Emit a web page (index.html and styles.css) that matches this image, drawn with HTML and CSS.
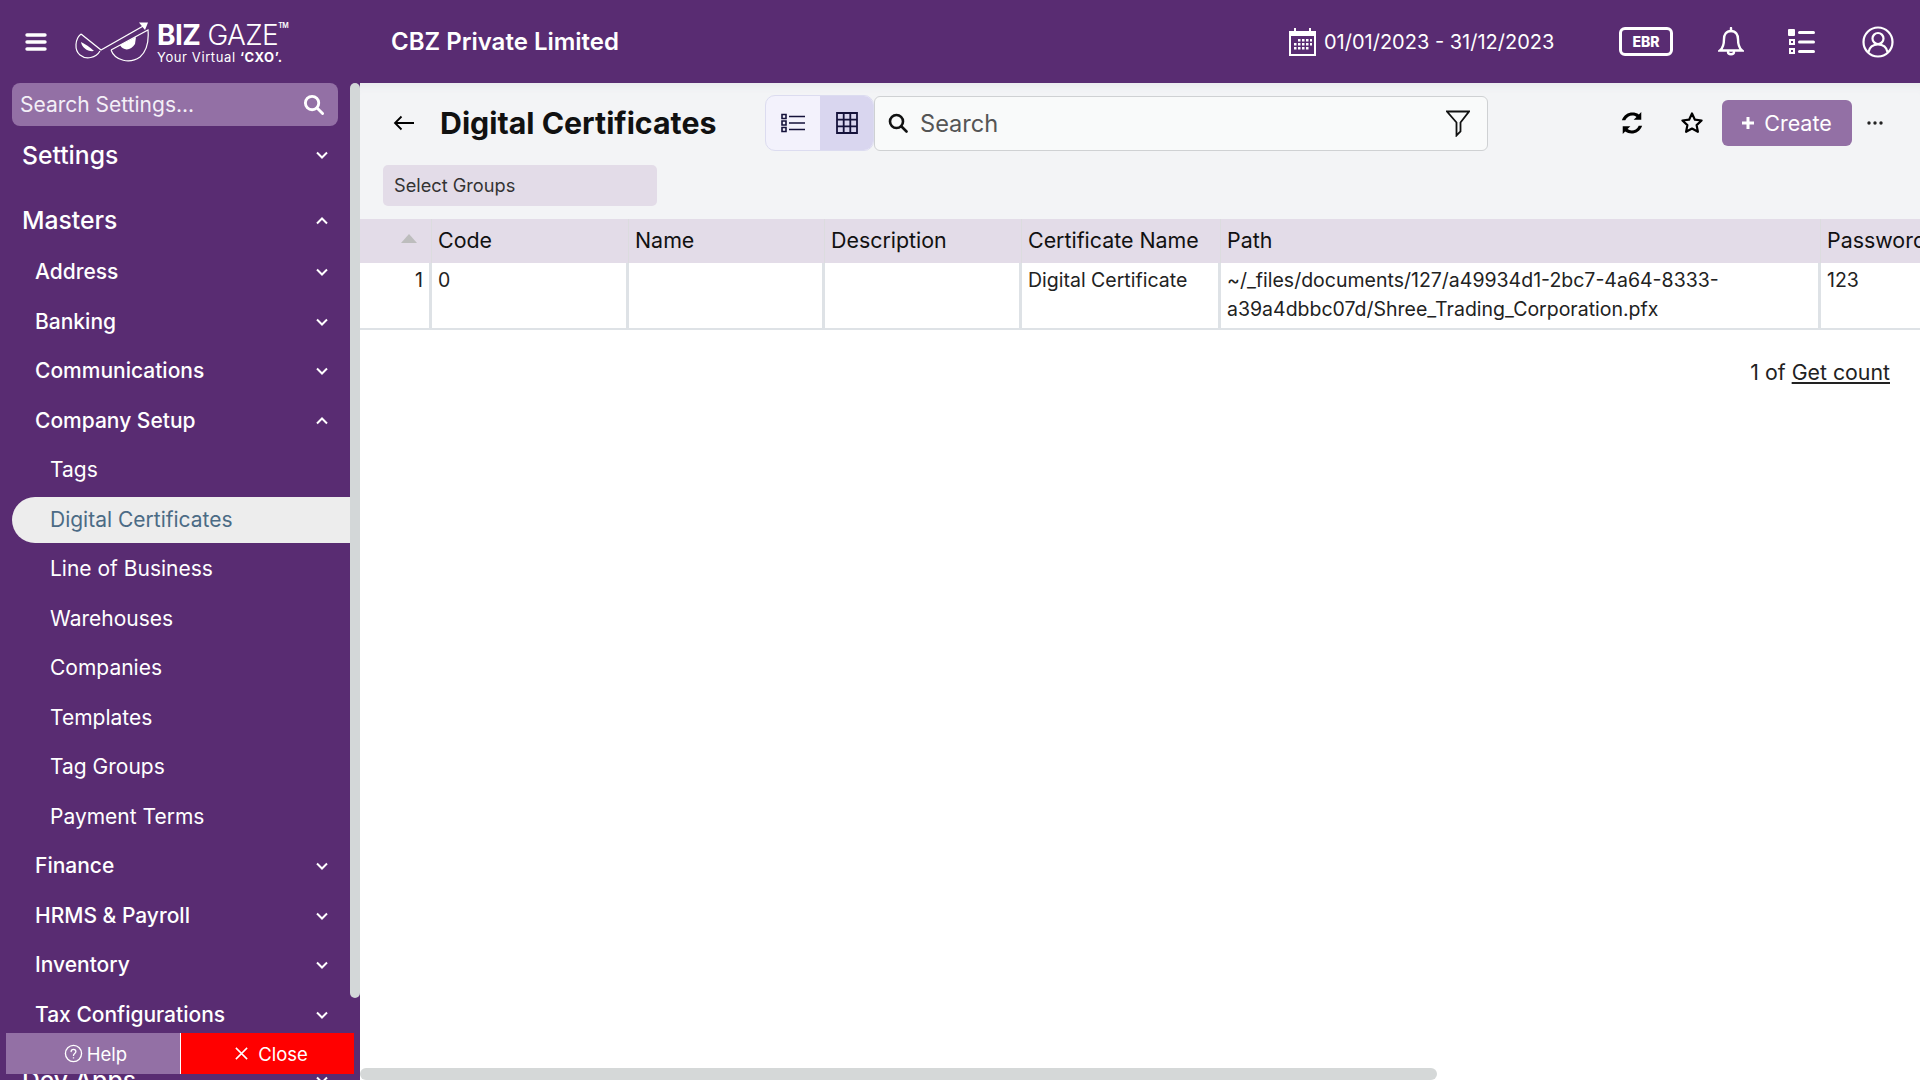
FILE: index.html
```html
<!DOCTYPE html>
<html lang="en">
<head>
    <meta charset="UTF-8">
    <title>Digital Certificates</title>
    <link rel="stylesheet" href="styles.css">
</head>
<body>

    <header class="topbar">
        <svg class="menu-icon" viewBox="0 0 22 18"><path d="M2 2h18M2 9h18M2 16h18" stroke="#fff" stroke-width="3.4" stroke-linecap="round"/></svg>
        <div class="logo">
            <svg class="logo-eyes" viewBox="0 0 76 44" fill="none" stroke="#fff">
                <path d="M7 14 C1 19 0 30 6 35 C12 40 22 38 26 31" stroke-width="1.2"/>
                <path d="M37 30 C41 41 56 44 66 37 C73 31 75 22 74 10 L37 30" stroke-width="1.2"/>
                <path d="M7 22 C8 28 14 32 20 31 C16 27 11 24 7 22 Z M46 25 C49 31 57 31 61 24 L62 17 Z" fill="#fff" stroke="none"/>
                <path d="M7 14 L27 30 L71 5" stroke-width="1.4"/>
                <path d="M65 2.500 L74 2.500 L71 10 Z" fill="#fff" stroke="none"/>
            </svg>
            <div class="logo-text">
                <div class="logo-name"><b>BIZ</b> GAZE<sup>TM</sup></div>
                <div class="logo-tag">Your Virtual <b>‘CXO’.</b></div>
            </div>
        </div>
        <div class="company">CBZ Private Limited</div>

        <svg class="cal-icon" viewBox="0 0 27 28" fill="#fff">
            <path fill-rule="evenodd" d="M0 3h5V0h2v3h13V0h2v3h5v25H0zM2 8v18h23V8z"/>
            <path d="M9 11h2.500v2.500H9zM13 11h2.500v2.500H13zM17 11h2.500v2.500H17zM21 11h2v2.500h-2zM5 15h2.500v2.500H5zM9 15h2.500v2.500H9zM13 15h2.500v2.500H13zM17 15h2.500v2.500H17zM21 15h2v2.500h-2zM5 19h2.500v2.500H5zM9 19h2.500v2.500H9zM13 19h2.500v2.500H13zM17 19h2.500v2.500H17z"/>
        </svg>
        <div class="date-range">01/01/2023 - 31/12/2023</div>
        <div class="ebr">EBR</div>
        <svg class="bell-icon" viewBox="0 0 26 30" fill="none" stroke="#fff" stroke-width="2.400">
            <path d="M13 4C8 4 6 8 6 12c0 6-1 9-4 11.500h22C21 21 20 18 20 12c0-4-2-8-7-8z"/>
            <path d="M13 1v3M10 25c0 3 6 3 6 0" stroke-linecap="round"/>
        </svg>
        <svg class="list-icon" viewBox="0 0 27 26" fill="#fff">
            <rect x="0" y="0" width="7" height="7" rx="1"/>
            <path fill-rule="evenodd" d="M1 10h6v6H1zm2 2v2h2v-2zM1 19h6v6H1zm2 2v2h2v-2z"/>
            <rect x="10" y="2" width="17" height="3" rx="1.500"/><rect x="10" y="11.500" width="17" height="3" rx="1.500"/><rect x="10" y="21" width="17" height="3" rx="1.500"/>
        </svg>
        <svg class="user-icon" viewBox="0 0 32 32" fill="none" stroke="#fff" stroke-width="2.200">
            <circle cx="16" cy="16" r="14.500"/><circle cx="16" cy="12.500" r="5.500"/>
            <path d="M6.500 26c1-5 5-7.500 9.500-7.500s8.500 2.500 9.500 7.500"/>
        </svg>
    </header>

    <div class="layout">
        <aside class="sidebar">
            <div class="side-search">
                <span>Search Settings...</span>
                <svg viewBox="0 0 22 22" fill="none" stroke="#fff" stroke-width="3"><circle cx="9.500" cy="9.500" r="7"/><path d="M15 15l5.500 5.500" stroke-linecap="round"/></svg>
            </div>

            <div class="nav-item nav-top settings">Settings <svg class="chev" viewBox="0 0 12 8"><path d="M1 1.500l5 5 5-5"/></svg></div>
            <div class="nav-item nav-top masters">Masters <svg class="chev" viewBox="0 0 12 8"><path d="M1 6.500l5-5 5 5"/></svg></div>

            <div class="nav-item nav-group address">Address <svg class="chev" viewBox="0 0 12 8"><path d="M1 1.500l5 5 5-5"/></svg></div>
            <div class="nav-item nav-group">Banking <svg class="chev" viewBox="0 0 12 8"><path d="M1 1.500l5 5 5-5"/></svg></div>
            <div class="nav-item nav-group">Communications <svg class="chev" viewBox="0 0 12 8"><path d="M1 1.500l5 5 5-5"/></svg></div>
            <div class="nav-item nav-group">Company Setup <svg class="chev" viewBox="0 0 12 8"><path d="M1 6.500l5-5 5 5"/></svg></div>
            <div class="nav-item nav-sub">Tags</div>
            <div class="nav-item nav-sub"><span class="active-pill">Digital Certificates</span></div>
            <div class="nav-item nav-sub">Line of Business</div>
            <div class="nav-item nav-sub">Warehouses</div>
            <div class="nav-item nav-sub">Companies</div>
            <div class="nav-item nav-sub">Templates</div>
            <div class="nav-item nav-sub">Tag Groups</div>
            <div class="nav-item nav-sub">Payment Terms</div>
            <div class="nav-item nav-group">Finance <svg class="chev" viewBox="0 0 12 8"><path d="M1 1.500l5 5 5-5"/></svg></div>
            <div class="nav-item nav-group">HRMS &amp; Payroll <svg class="chev" viewBox="0 0 12 8"><path d="M1 1.500l5 5 5-5"/></svg></div>
            <div class="nav-item nav-group">Inventory <svg class="chev" viewBox="0 0 12 8"><path d="M1 1.500l5 5 5-5"/></svg></div>
            <div class="nav-item nav-group">Tax Configurations <svg class="chev" viewBox="0 0 12 8"><path d="M1 1.500l5 5 5-5"/></svg></div>
            <div class="nav-item nav-top dev-apps">Dev Apps <svg class="chev" viewBox="0 0 12 8"><path d="M1 1.500l5 5 5-5"/></svg></div>

            <div class="side-thumb"></div>
            <div class="side-footer">
                <div class="help-btn">
                    <svg viewBox="0 0 20 20" fill="none" stroke="#fff" stroke-width="1.400"><circle cx="10" cy="10" r="8.500"/><path d="M7.500 8c0-3.200 5-3.200 5 0 0 2-2.500 2-2.500 4" stroke-linecap="round"/><path d="M10 14v1.200"/></svg>
                    Help
                </div>
                <div class="close-btn">
                    <svg viewBox="0 0 16 16" stroke="#fff" stroke-width="1.600"><path d="M2 2l12 12M14 2L2 14"/></svg>
                    Close
                </div>
            </div>
        </aside>

        <main class="content">
            <div class="toolbar">
                <div class="toolbar-row">
                    <svg class="back-icon" viewBox="0 0 22 16" fill="none" stroke="#000" stroke-width="1.800"><path d="M21 8H2M8.500 1.500L2 8l6.500 6.500"/></svg>
                    <h1>Digital Certificates</h1>
                    <div class="view-toggle">
                        <button class="toggle-btn">
                            <svg viewBox="0 0 24 20" fill="none" stroke="#14123a" stroke-width="1.600"><path d="M1 1.500h4v4H1zM1 8h4v4H1zM1 14.500h4v4H1zM8 3.500h16M8 10h16M8 16.500h16"/></svg>
                        </button>
                        <button class="toggle-btn selected">
                            <svg viewBox="0 0 22 22" fill="none" stroke="#14123a" stroke-width="1.800"><path d="M1 1h20v20H1zM1 7.700h20M1 14.300h20M7.700 1v20M14.300 1v20"/></svg>
                        </button>
                    </div>
                    <div class="search-box">
                        <svg class="search-glass" viewBox="0 0 20 20" fill="none" stroke="#111" stroke-width="2.600"><circle cx="8.500" cy="8.500" r="6.500"/><path d="M13.500 13.500l5 5" stroke-linecap="round"/></svg>
                        <span>Search</span>
                        <svg class="filter-icon" viewBox="0 0 24 26" fill="none" stroke="#111" stroke-width="1.800"><path d="M1 1h22l-8.500 11v9l-4 4V12z"/></svg>
                    </div>
                    <svg class="tool-icon refresh" viewBox="0 0 22 22" fill="#000">
                        <path d="M19.500 1v7h-7l2.600-2.600C12 3 7 3.800 4.800 8.500H1.700C4 1.500 12-.5 17.300 3.200z"/>
                        <path d="M2.500 21v-7h7l-2.600 2.600c3.100 2.400 8.100 1.600 10.300-3.100h3.100c-2.300 7-10.300 9-15.600 5.300z"/>
                    </svg>
                    <svg class="tool-icon star" viewBox="0 0 24 24" fill="none" stroke="#000" stroke-width="2.200"><path d="M12 2.500l2.900 6.200 6.700.8-5 4.600 1.300 6.700-5.900-3.300-5.900 3.300 1.300-6.700-5-4.600 6.700-.8z" stroke-linejoin="round"/></svg>
                    <button class="create-btn"><svg viewBox="0 0 12 12" fill="#fff"><path d="M4.500 0h3v4.500H12v3H7.500V12h-3V7.500H0v-3h4.500z"/></svg>Create</button>
                    <svg class="more-icon" viewBox="0 0 16 4" fill="#222"><circle cx="2" cy="2" r="1.700"/><circle cx="8" cy="2" r="1.700"/><circle cx="14" cy="2" r="1.700"/></svg>
                </div>
                <div class="select-groups">Select Groups</div>
            </div>

            <div class="table-wrap">
                <table class="grid">
                    <colgroup>
                        <col class="c-num"><col class="c-code"><col class="c-name"><col class="c-desc"><col class="c-cert"><col class="c-path"><col class="c-pass">
                    </colgroup>
                    <thead>
                        <tr>
                            <th><span class="sort-up"></span></th>
                            <th>Code</th>
                            <th>Name</th>
                            <th>Description</th>
                            <th>Certificate Name</th>
                            <th>Path</th>
                            <th>Password</th>
                        </tr>
                    </thead>
                    <tbody>
                        <tr>
                            <td class="row-num">1</td>
                            <td>0</td>
                            <td></td>
                            <td></td>
                            <td>Digital Certificate</td>
                            <td>~/_files/documents/127/a49934d1-2bc7-4a64-8333-<br>a39a4dbbc07d/Shree_Trading_Corporation.pfx</td>
                            <td>123</td>
                        </tr>
                    </tbody>
                </table>
            </div>

            <div class="pager">1 of <a>Get count</a></div>
            <div class="h-thumb"></div>
        </main>
    </div>

</body>
</html>
```

FILE: styles.css
```css
*{
    margin: 0;padding: 0;box-sizing: border-box
}

body{
    font-family: Inter, "Liberation Sans", sans-serif;
    height: 100vh;
    overflow: hidden;
    display: flex;
    flex-direction: column;
    background: white;
    color: #111;
}

/* top bar */
.topbar{
    height: 83px;
    flex: none;
    display: flex;
    align-items: center;
    background: #592c72;
    color: white;
}

.menu-icon{
    width: 22px;height: 18px;
    margin-left: 25px;
}

.logo{
    display: flex;
    align-items: flex-end;
    margin-left: 27px;
    gap: 7px;
    width: 219px;
}

.logo-eyes{
    width: 76px;height: 44px;
}

.logo-text{
    line-height: 1;
}

.logo-name{
    font-size: 28px;
    font-weight: 300;
    white-space: nowrap;
    letter-spacing: -0.6px;
}

.logo-name b{
    font-weight: 700;
}

.logo-name sup{
    font-size: 7px;
    vertical-align: 17px;
    line-height: 0;
    font-weight: 600;
}

.logo-tag{
    font-size: 13px;
    margin-top: 2px;
    white-space: nowrap;
    letter-spacing: 0.6px;
}

.company{
    font-size: 24px;
    font-weight: 600;
    margin-left: 98px;
    width: 898px;
}

.cal-icon{
    width: 27px;height: 28px;
}

.date-range{
    font-size: 20px;
    margin-left: 8px;
    width: 295px;
}

.ebr{
    width: 54px;height: 29px;
    border: 3px solid white;
    border-radius: 6px;
    font-size: 14px;
    font-weight: 800;
    display: flex;
    justify-content: center;
    align-items: center;
}

.bell-icon{
    width: 26px;height: 30px;
    margin-left: 45px;
}

.list-icon{
    width: 27px;height: 26px;
    margin-left: 44px;
}

.user-icon{
    width: 32px;height: 32px;
    margin-left: 47px;
}

/* layout */
.layout{
    flex: 1;
    display: flex;
    min-height: 0;
}

.sidebar{
    width: 360px;
    flex: none;
    position: relative;
    overflow: hidden;
    background: #592c72;
    color: white;
}

.side-search{
    width: 326px;height: 43px;
    margin-left: 12px;
    padding: 0 14px 0 8px;
    background: #9370a5;
    border-radius: 8px;
    display: flex;
    justify-content: space-between;
    align-items: center;
    font-size: 21px;
    color: #f4eff7;
}

.side-search svg{
    width: 21px;height: 21px;
}

.nav-item{
    width: 350px;
    height: 49.5px;
    display: flex;
    align-items: center;
    position: relative;
    white-space: nowrap;
}

.chev{
    position: absolute;
    left: 316px;
    top: 21px;
    width: 12px;height: 8px;
    fill: none;
    stroke: white;
    stroke-width: 2;
}

.nav-top{
    padding-left: 22px;
    font-size: 24.700px;
    font-weight: 500;
}

.settings{
    margin-top: 4px;
}

.masters{
    margin-top: 16px;
}

.address{
    margin-top: 2px;
}

.dev-apps{
    margin-top: 16px;
}

.nav-group{
    padding-left: 35px;
    font-size: 21px;
    font-weight: 500;
}

.nav-sub{
    padding-left: 50px;
    font-size: 21px;
}

.active-pill{
    position: absolute;
    left: 12px;
    right: 0;
    top: 2px;
    height: 46px;
    padding-left: 38px;
    display: flex;
    align-items: center;
    background: #ededed;
    color: #4b6b85;
    border-radius: 23px 0 0 23px;
}

.side-thumb{
    position: absolute;
    left: 350px;
    top: 0;
    width: 10px;height: 915px;
    background: #d3d7d8;
    border-radius: 5px;
}

.side-footer{
    position: absolute;
    left: 6px;
    top: 950px;
    display: flex;
    height: 41px;
    font-size: 18.500px;
    color: white;
}

.help-btn,.close-btn{
    display: flex;
    justify-content: center;
    align-items: center;
    gap: 4px;
}

.help-btn{
    width: 175px;
    padding-left: 5px;
    background: #9370a5;
    border-right: 1px solid white;
}

.help-btn svg{
    width: 19px;height: 19px;
}

.close-btn{
    width: 173px;
    padding-left: 7px;
    background: red;
    gap: 9px;
}

.close-btn svg{
    width: 15px;height: 15px;
}

/* main */
.content{
    flex: 1;
    min-width: 0;
    position: relative;
    overflow: hidden;
}

.toolbar{
    height: 136px;
    background: #f3f4f6;
    box-shadow: inset 0 10px 10px -8px #e6e7ea;
    padding-top: 12px;
}

.toolbar-row{
    height: 56px;
    display: flex;
    align-items: center;
}

.back-icon{
    width: 22px;height: 16px;
    margin-left: 33px;
}

h1{
    font-size: 30.300px;
    font-weight: 700;
    line-height: 54px;
    color: #111;
    margin-left: 25px;
    width: 325px;
}

.view-toggle{
    display: flex;
    width: 109px;height: 56px;
    border: 1px solid #dcdcf0;
    border-radius: 10px;
    overflow: hidden;
    background: #f3f2fc;
}

.toggle-btn{
    width: 54px;
    border: none;
    background: none;
    display: flex;
    justify-content: center;
    align-items: center;
}

.toggle-btn svg{
    width: 24px;height: 22px;
}

.toggle-btn.selected{
    flex: 1;
    background: #d9d6ef;
}

.search-box{
    width: 614px;height: 55px;
    display: flex;
    align-items: center;
    background: #f9fafa;
    border: 1px solid #cfd1d3;
    border-radius: 6px;
    padding: 0 17px 0 13px;
    font-size: 23.600px;
    color: #555;
}

.search-glass{
    width: 20px;height: 20px;
    margin-right: 12px;
}

.filter-icon{
    width: 24px;height: 27px;
    margin-left: auto;
}

.tool-icon{
    width: 24px;height: 24px;
}

.refresh{
    margin-left: 132px;
}

.star{
    margin-left: 36px;
}

.create-btn{
    width: 130px;height: 46px;
    margin-left: 18px;
    border: none;
    border-radius: 6px;
    background: #9370a5;
    color: white;
    font: 21.500px Inter, "Liberation Sans", sans-serif;
    display: flex;
    justify-content: center;
    align-items: center;
    gap: 10px;
}

.create-btn svg{
    width: 12px;height: 12px;
}

.more-icon{
    width: 16px;height: 4px;
    margin-left: 15px;
}

.select-groups{
    width: 274px;height: 41px;
    margin: 14px 0 0 23px;
    padding: 0 0 2px 11px;
    display: flex;
    align-items: center;
    background: #e3dce8;
    border-radius: 5px;
    font-size: 18.200px;
    color: #333;
}

/* grid */
.table-wrap{
    overflow: hidden;
}

.grid{
    table-layout: fixed;
    width: 1701px;
    border-collapse: separate;
    border-spacing: 0;
    font-size: 19.500px;
}

.c-num{width: 72px}
.c-code{width: 197px}
.c-name{width: 196px}
.c-desc{width: 197px}
.c-cert{width: 199px}
.c-path{width: 600px}
.c-pass{width: 240px}

.grid th{
    height: 44px;
    padding: 0 0 2px 6px;
    text-align: left;
    font-size: 21.400px;
    font-weight: 400;
    color: #111;
    background: #e3dce8;
    border-right: 1px solid #dcdcdf;
    white-space: nowrap;
}

.sort-up{
    display: block;
    width: 0;
    margin: -4px 0 0 35px;
    border-left: 8px solid transparent;
    border-right: 8px solid transparent;
    border-bottom: 9px solid #bdbdbd;
}

.grid td{
    height: 67px;
    padding: 3px 6px 0;
    vertical-align: top;
    line-height: 29px;
    color: #222;
    border-right: 3px solid #dee2e6;
    border-bottom: 2px solid #dee2e6;
}

.grid td.row-num{
    text-align: right;
}

.pager{
    margin-top: 29px;
    padding-right: 30px;
    text-align: right;
    font-size: 21.300px;
    color: #222;
}

.pager a{
    text-decoration: underline;
}

.h-thumb{
    position: absolute;
    left: 0;
    top: 985px;
    width: 1077px;height: 12px;
    background: #d5d8d8;
    border-radius: 6px;
}
```
